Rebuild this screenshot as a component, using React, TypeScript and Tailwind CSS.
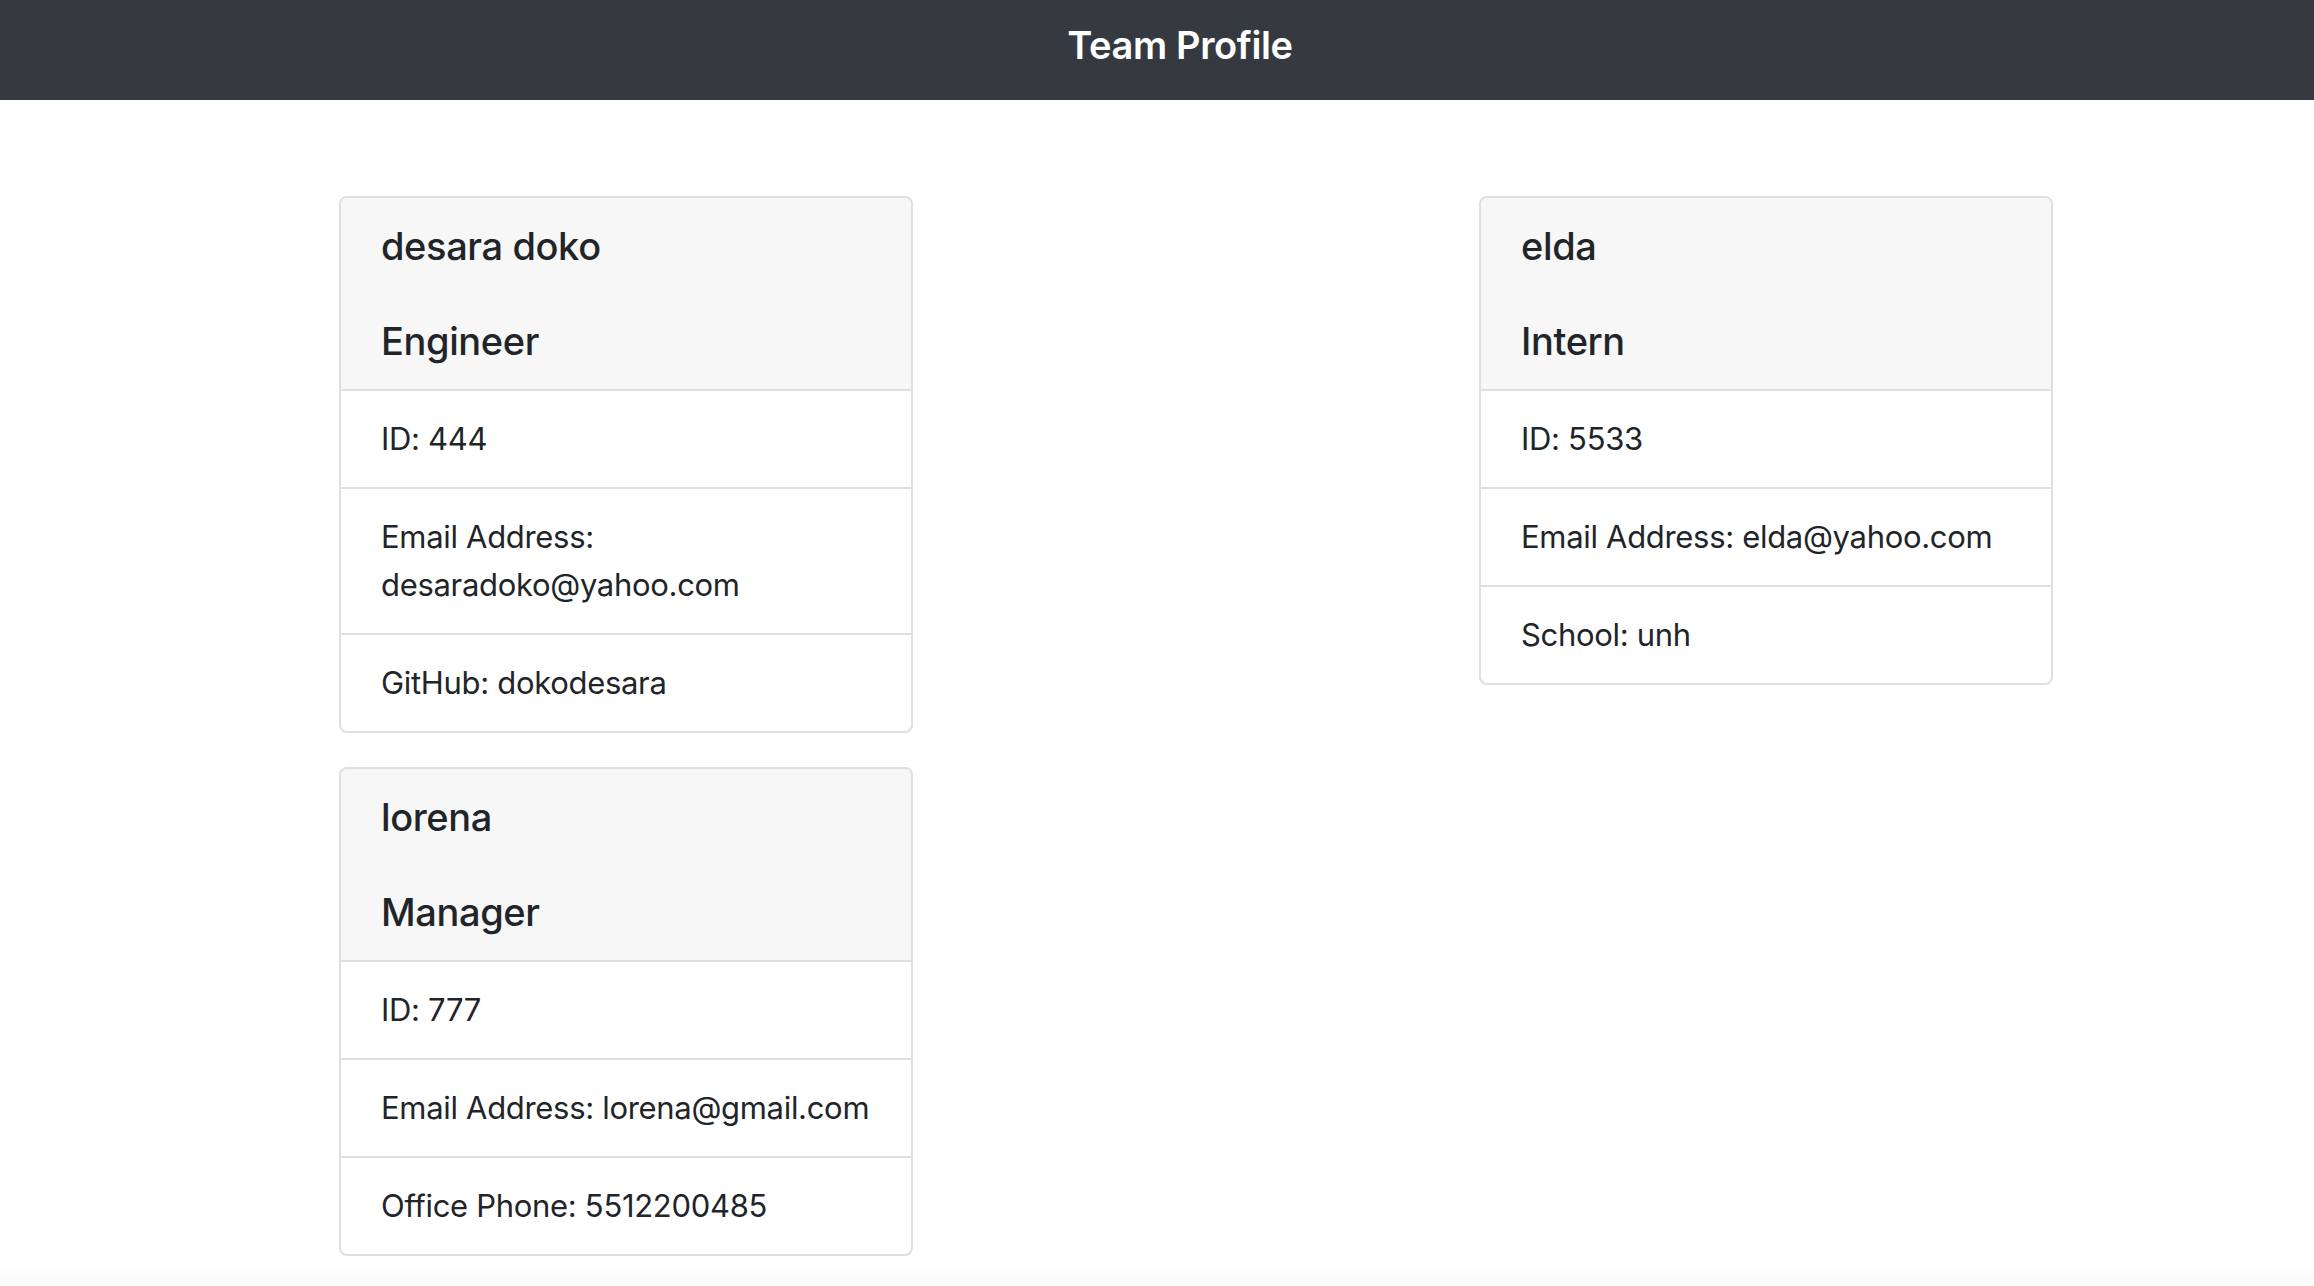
const font = { fontFamily: 'Inter, "Noto Sans", "Liberation Sans", sans-serif' };

type Member = {
  name: string;
  role: string;
  lines: string[];
};

const leftColumn: Member[] = [
  {
    name: "desara doko",
    role: "Engineer",
    lines: ["ID: 444", "Email Address: desaradoko@yahoo.com", "GitHub: dokodesara"],
  },
  {
    name: "lorena",
    role: "Manager",
    lines: ["ID: 777", "Email Address: lorena@gmail.com", "Office Phone: 5512200485"],
  },
];

const rightColumn: Member[] = [
  {
    name: "elda",
    role: "Intern",
    lines: ["ID: 5533", "Email Address: elda@yahoo.com", "School: unh"],
  },
];

function MemberCard({ member }: { member: Member }) {
  return (
    <div className="w-[574px] overflow-hidden rounded-[8px] border-2 border-[#dfdfdf] bg-white text-[#212529]">
      <div className="border-b-2 border-[#dfdfdf] bg-[#f7f7f7] px-[40px] py-[24px]">
        <h2 className="text-[38px] font-medium leading-[48px] tracking-[-0.01em]">{member.name}</h2>
        <h3 className="mt-[47px] text-[38px] font-medium leading-[48px] tracking-[-0.01em]">
          {member.role}
        </h3>
      </div>
      <ul>
        {member.lines.map((line, i) => (
          <li
            key={line}
            className={`px-[40px] py-[24px] text-[31px] leading-[48px] tracking-[-0.01em] ${
              i < member.lines.length - 1 ? "border-b-2 border-[#dfdfdf]" : ""
            }`}
          >
            {line}
          </li>
        ))}
      </ul>
    </div>
  );
}

export default function App() {
  return (
    <div className="flex min-h-screen flex-col bg-white" style={font}>
      <header className="flex h-[100px] items-center justify-center bg-[#343a40] pl-[46px]">
        <h1 className="pb-[10px] text-[38px] font-semibold tracking-[-0.01em] text-white">
          Team Profile
        </h1>
      </header>

      <main className="flex flex-1 items-start gap-[566px] pl-[339px] pt-[96px]">
        <div className="flex flex-col gap-[34px]">
          {leftColumn.map((m) => (
            <MemberCard key={m.name} member={m} />
          ))}
        </div>
        <div className="flex flex-col gap-[34px]">
          {rightColumn.map((m) => (
            <MemberCard key={m.name} member={m} />
          ))}
        </div>
      </main>

      <footer className="h-[22px] bg-gradient-to-b from-white to-[#fafafa]" />
    </div>
  );
}
